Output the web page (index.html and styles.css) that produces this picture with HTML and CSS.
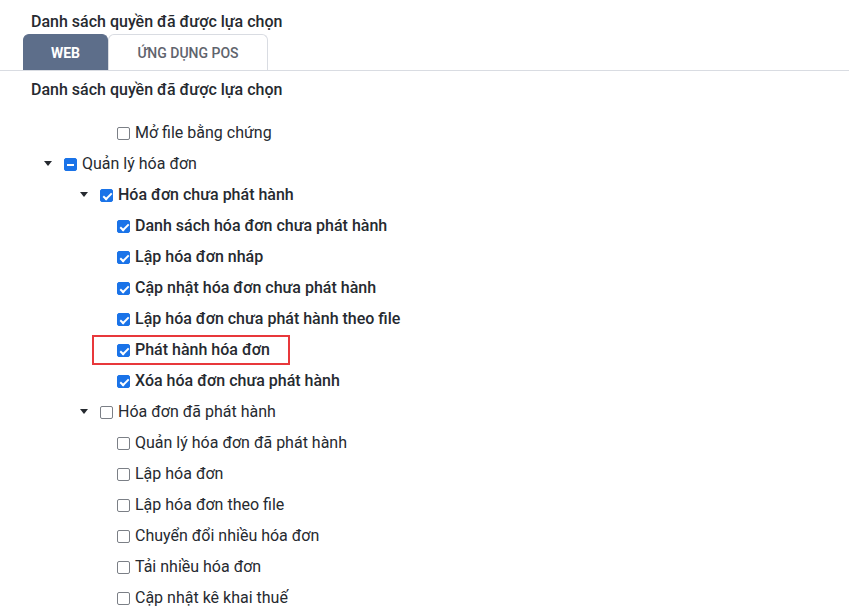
FILE: index.html
```html
<!DOCTYPE html>
<html lang="vi">
<head>
<meta charset="utf-8">
<link rel="stylesheet" href="styles.css">
</head>
<body>
<div class="page">
  <div class="title">Danh sách quyền đã được lựa chọn</div>
  <div class="tabs">
    <div class="tab active">WEB</div>
    <div class="tab">ỨNG DỤNG POS</div>
  </div>
  <div class="subtitle">Danh sách quyền đã được lựa chọn</div>
  <div class="tree">
    <div class="row leaf l2"><span class="cb"></span><span class="lbl">Mở file bằng chứng</span></div>
    <div class="row l0"><span class="caret"></span><span class="cb ind"></span><span class="lbl">Quản lý hóa đơn</span></div>
    <div class="row l1"><span class="caret"></span><span class="cb on"></span><span class="lbl b">Hóa đơn chưa phát hành</span></div>
    <div class="row leaf l2"><span class="cb on"></span><span class="lbl b">Danh sách hóa đơn chưa phát hành</span></div>
    <div class="row leaf l2"><span class="cb on"></span><span class="lbl b">Lập hóa đơn nháp</span></div>
    <div class="row leaf l2"><span class="cb on"></span><span class="lbl b">Cập nhật hóa đơn chưa phát hành</span></div>
    <div class="row leaf l2"><span class="cb on"></span><span class="lbl b">Lập hóa đơn chưa phát hành theo file</span></div>
    <div class="row leaf l2 hl"><span class="cb on"></span><span class="lbl b">Phát hành hóa đơn</span><span class="mark"></span></div>
    <div class="row leaf l2"><span class="cb on"></span><span class="lbl b">Xóa hóa đơn chưa phát hành</span></div>
    <div class="row l1"><span class="caret"></span><span class="cb"></span><span class="lbl">Hóa đơn đã phát hành</span></div>
    <div class="row leaf l2"><span class="cb"></span><span class="lbl">Quản lý hóa đơn đã phát hành</span></div>
    <div class="row leaf l2"><span class="cb"></span><span class="lbl">Lập hóa đơn</span></div>
    <div class="row leaf l2"><span class="cb"></span><span class="lbl">Lập hóa đơn theo file</span></div>
    <div class="row leaf l2"><span class="cb"></span><span class="lbl">Chuyển đổi nhiều hóa đơn</span></div>
    <div class="row leaf l2"><span class="cb"></span><span class="lbl">Tải nhiều hóa đơn</span></div>
    <div class="row leaf l2"><span class="cb"></span><span class="lbl">Cập nhật kê khai thuế</span></div>
  </div>
</div>
</body>
</html>
```
FILE: styles.css
```css
html, body {
  margin: 0;
  padding: 0;
  background: #ffffff;
}
body {
  font-family: Roboto, "Liberation Sans", sans-serif;
  color: #262a30;
  overflow: hidden;
  height: 609px;
}
.page {
  padding-top: 12px;
}
.title, .subtitle {
  font-size: 16px;
  font-weight: 500;
  line-height: 20px;
  padding-left: 31px;
  color: #262a30;
}
.tabs {
  display: flex;
  margin-top: 2px;
  padding-left: 23px;
  border-bottom: 1px solid #d9dce2;
  height: 36px;
}
.tab {
  box-sizing: border-box;
  height: 36px;
  display: flex;
  align-items: center;
  justify-content: center;
  font-size: 14px;
  font-weight: 500;
  color: #5f646d;
  border: 1px solid #d9dce2;
  border-bottom: none;
  border-radius: 6px 6px 0 0;
  width: 160px;
}
.tab.active {
  width: 85px;
  background: #5d6e8a;
  border-color: #5d6e8a;
  color: #ffffff;
  font-weight: 700;
}
.subtitle {
  margin-top: 9px;
}
.tree {
  margin-top: 17px;
}
.row {
  position: relative;
  display: flex;
  align-items: center;
  height: 31px;
  font-size: 16px;
}
.row.l0 { padding-left: 38px; }
.row.l1 { padding-left: 74px; }
.row.leaf.l2 { padding-left: 117px; }
.caret {
  width: 20px;
  height: 20px;
  margin-right: 6px;
  display: flex;
  align-items: center;
  justify-content: center;
}
.caret::before {
  content: "";
  border-left: 4.5px solid transparent;
  border-right: 4.5px solid transparent;
  border-top: 5px solid #262a30;
}
.cb {
  box-sizing: border-box;
  width: 13px;
  height: 13px;
  border: 1px solid #7b7f86;
  border-radius: 2px;
  margin-right: 5px;
  position: relative;
  flex: none;
  margin-top: 2px;
}
.cb.on, .cb.ind {
  background: #1a73e8;
  border-color: #1a73e8;
}
.cb.on::after {
  content: "";
  position: absolute;
  left: 3.5px;
  top: 0.5px;
  width: 3px;
  height: 7px;
  border-right: 2px solid #fff;
  border-bottom: 2px solid #fff;
  transform: rotate(45deg);
}
.cb.ind::after {
  content: "";
  position: absolute;
  left: 2px;
  right: 2px;
  top: 4.5px;
  height: 2px;
  background: #fff;
}
.lbl {
  white-space: nowrap;
  color: #262a30;
}
.lbl.b {
  font-weight: 500;
}
.mark {
  position: absolute;
  left: 92px;
  top: 1px;
  width: 198px;
  height: 30px;
  box-sizing: border-box;
  border: 2px solid #e8383b;
}
```
